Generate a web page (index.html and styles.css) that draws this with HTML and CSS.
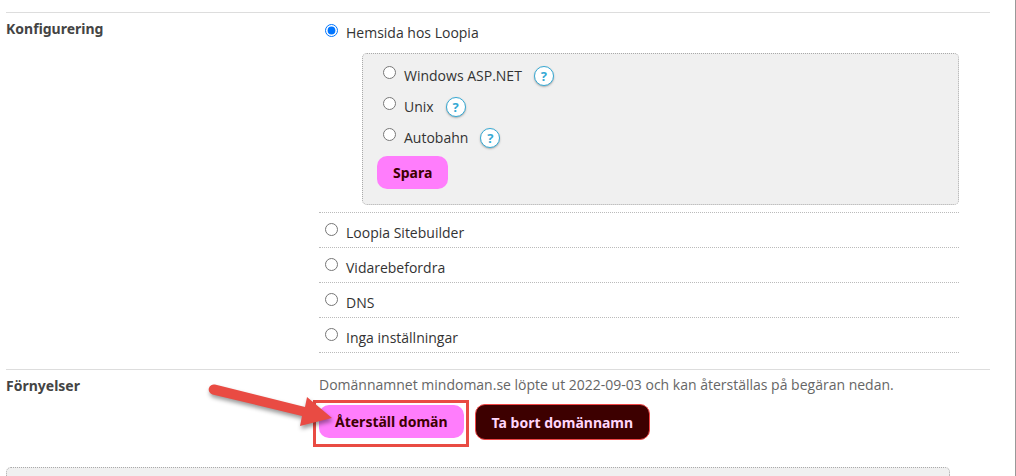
FILE: index.html
```html
<!DOCTYPE html>
<html lang="sv">
  <head>
    <meta charset="UTF-8" />
    <meta name="viewport" content="width=device-width, initial-scale=1.0" />
    <title>Konfigurering</title>
    <link rel="stylesheet" href="styles.css">
  </head>
  <body>
    <main class="page">
      <section class="row">
        <h2 class="row-title">Konfigurering</h2>
        <form class="row-content" onsubmit="return false;">
          <div class="option">
            <div class="choice">
              <input type="radio" name="konfig" id="hemsida" checked />
              <label for="hemsida">Hemsida hos Loopia</label>
            </div>
            <div class="panel">
              <div class="choice">
                <input type="radio" name="server" id="windows" />
                <label for="windows">Windows ASP.NET</label>
                <button type="button" class="help">?</button>
              </div>
              <div class="choice">
                <input type="radio" name="server" id="unix" />
                <label for="unix">Unix</label>
                <button type="button" class="help">?</button>
              </div>
              <div class="choice">
                <input type="radio" name="server" id="autobahn" />
                <label for="autobahn">Autobahn</label>
                <button type="button" class="help">?</button>
              </div>
              <button type="submit" class="btn">Spara</button>
            </div>
          </div>
          <div class="option choice">
            <input type="radio" name="konfig" id="sitebuilder" />
            <label for="sitebuilder">Loopia Sitebuilder</label>
          </div>
          <div class="option choice">
            <input type="radio" name="konfig" id="vidarebefordra" />
            <label for="vidarebefordra">Vidarebefordra</label>
          </div>
          <div class="option choice">
            <input type="radio" name="konfig" id="dns" />
            <label for="dns">DNS</label>
          </div>
          <div class="option choice">
            <input type="radio" name="konfig" id="inga" />
            <label for="inga">Inga inställningar</label>
          </div>
        </form>
      </section>

      <section class="row">
        <h2 class="row-title">Förnyelser</h2>
        <div class="row-content">
          <p class="info">Domännamnet mindoman.se löpte ut 2022-09-03 och kan återställas på begäran nedan.</p>
          <div class="actions">
            <div class="marked">
              <button type="button" class="btn">Återställ domän</button>
              <svg class="arrow" width="136" height="58" viewBox="0 0 136 58" aria-hidden="true">
                <path d="M15 8.600 L105 31 L107 21 L132 42 L100 50 L102 40 L12.500 18.400 A5 5 0 0 1 15 8.600 Z" fill="#e94b43" />
              </svg>
            </div>
            <button type="button" class="btn btn-dark">Ta bort domännamn</button>
          </div>
        </div>
      </section>

      <section class="footer-panel"></section>
    </main>
  </body>
</html>
```
FILE: styles.css
```css
* {
  box-sizing: border-box;
}
body {
  margin: 0;
  font-family: "Open Sans", "Noto Sans", sans-serif;
  font-size: 14px;
  color: #333;
  background-color: #fff;
}
.page {
  display: flex;
  flex-direction: column;
  min-height: 100vh;
  padding: 12px 25px 0 6px;
  border-right: 1px solid #999;
}
.row {
  display: grid;
  grid-template-columns: 313px 1fr;
  padding-right: 31px;
  padding-bottom: 16px;
  border-top: 1px solid #ddd;
}
.row-title {
  margin: 0;
  padding-top: 6px;
  font-family: "Noto Sans", sans-serif;
  font-size: 14px;
  line-height: 20px;
  color: #444;
}
.option {
  border-bottom: 1px dotted #bbb;
}
.choice {
  display: flex;
  align-items: center;
  height: 35px;
  padding-top: 5px;
  padding-left: 6px;
}
.choice input {
  width: 13px;
  height: 13px;
  margin: 0 8px 6px 0;
}
.choice label {
  line-height: 18px;
}
.option > .choice {
  height: 40px;
  padding-top: 0;
}
.panel {
  margin-left: 43px;
  margin-bottom: 7px;
  padding: 6px 14px 15px;
  background-color: #f0f0f0;
  border: 1px dotted #aaa;
  border-radius: 5px;
}
.panel .choice {
  height: 31px;
  padding-top: 0;
}
.help {
  width: 20px;
  height: 20px;
  margin-left: 12px;
  padding: 0;
  font-family: "Noto Sans", sans-serif;
  font-size: 13px;
  font-weight: bold;
  line-height: 16px;
  color: #35a9d4;
  background-color: #fff;
  border: 1px solid #35a9d4;
  border-radius: 50%;
  box-shadow: 0 1px 2px #aaa;
}
.btn {
  display: block;
  height: 33px;
  padding: 0 16px;
  font-family: "Noto Sans", sans-serif;
  font-size: 14px;
  font-weight: bold;
  color: #3d0000;
  background-color: #ff7dfc;
  border: none;
  border-radius: 10px;
  cursor: pointer;
}
.panel .btn {
  margin-top: 3px;
}
.btn-dark {
  height: 36px;
  margin-top: 4px;
  color: #ffd6fb;
  background-color: #3d0000;
  border: 1px solid #f04545;
}
.info {
  margin: 0;
  padding-top: 6px;
  line-height: 18px;
  color: #666;
}
.actions {
  display: flex;
  align-items: flex-start;
  gap: 6px;
  margin-top: 6px;
  margin-left: -6px;
  margin-bottom: 4px;
}
.marked {
  position: relative;
  padding: 2px 2px 6px 3px;
  border: 3px solid #e94b43;
}
/* arrow pointing at the button */
.arrow {
  position: absolute;
  left: -116px;
  top: -27px;
  filter: drop-shadow(1px 3px 2px #0006);
}
.footer-panel {
  flex: 1;
  margin-right: 40px;
  background-color: #f0f0f0;
  border: 1px dotted #aaa;
  border-bottom: none;
  border-radius: 5px 5px 0 0;
}
```
